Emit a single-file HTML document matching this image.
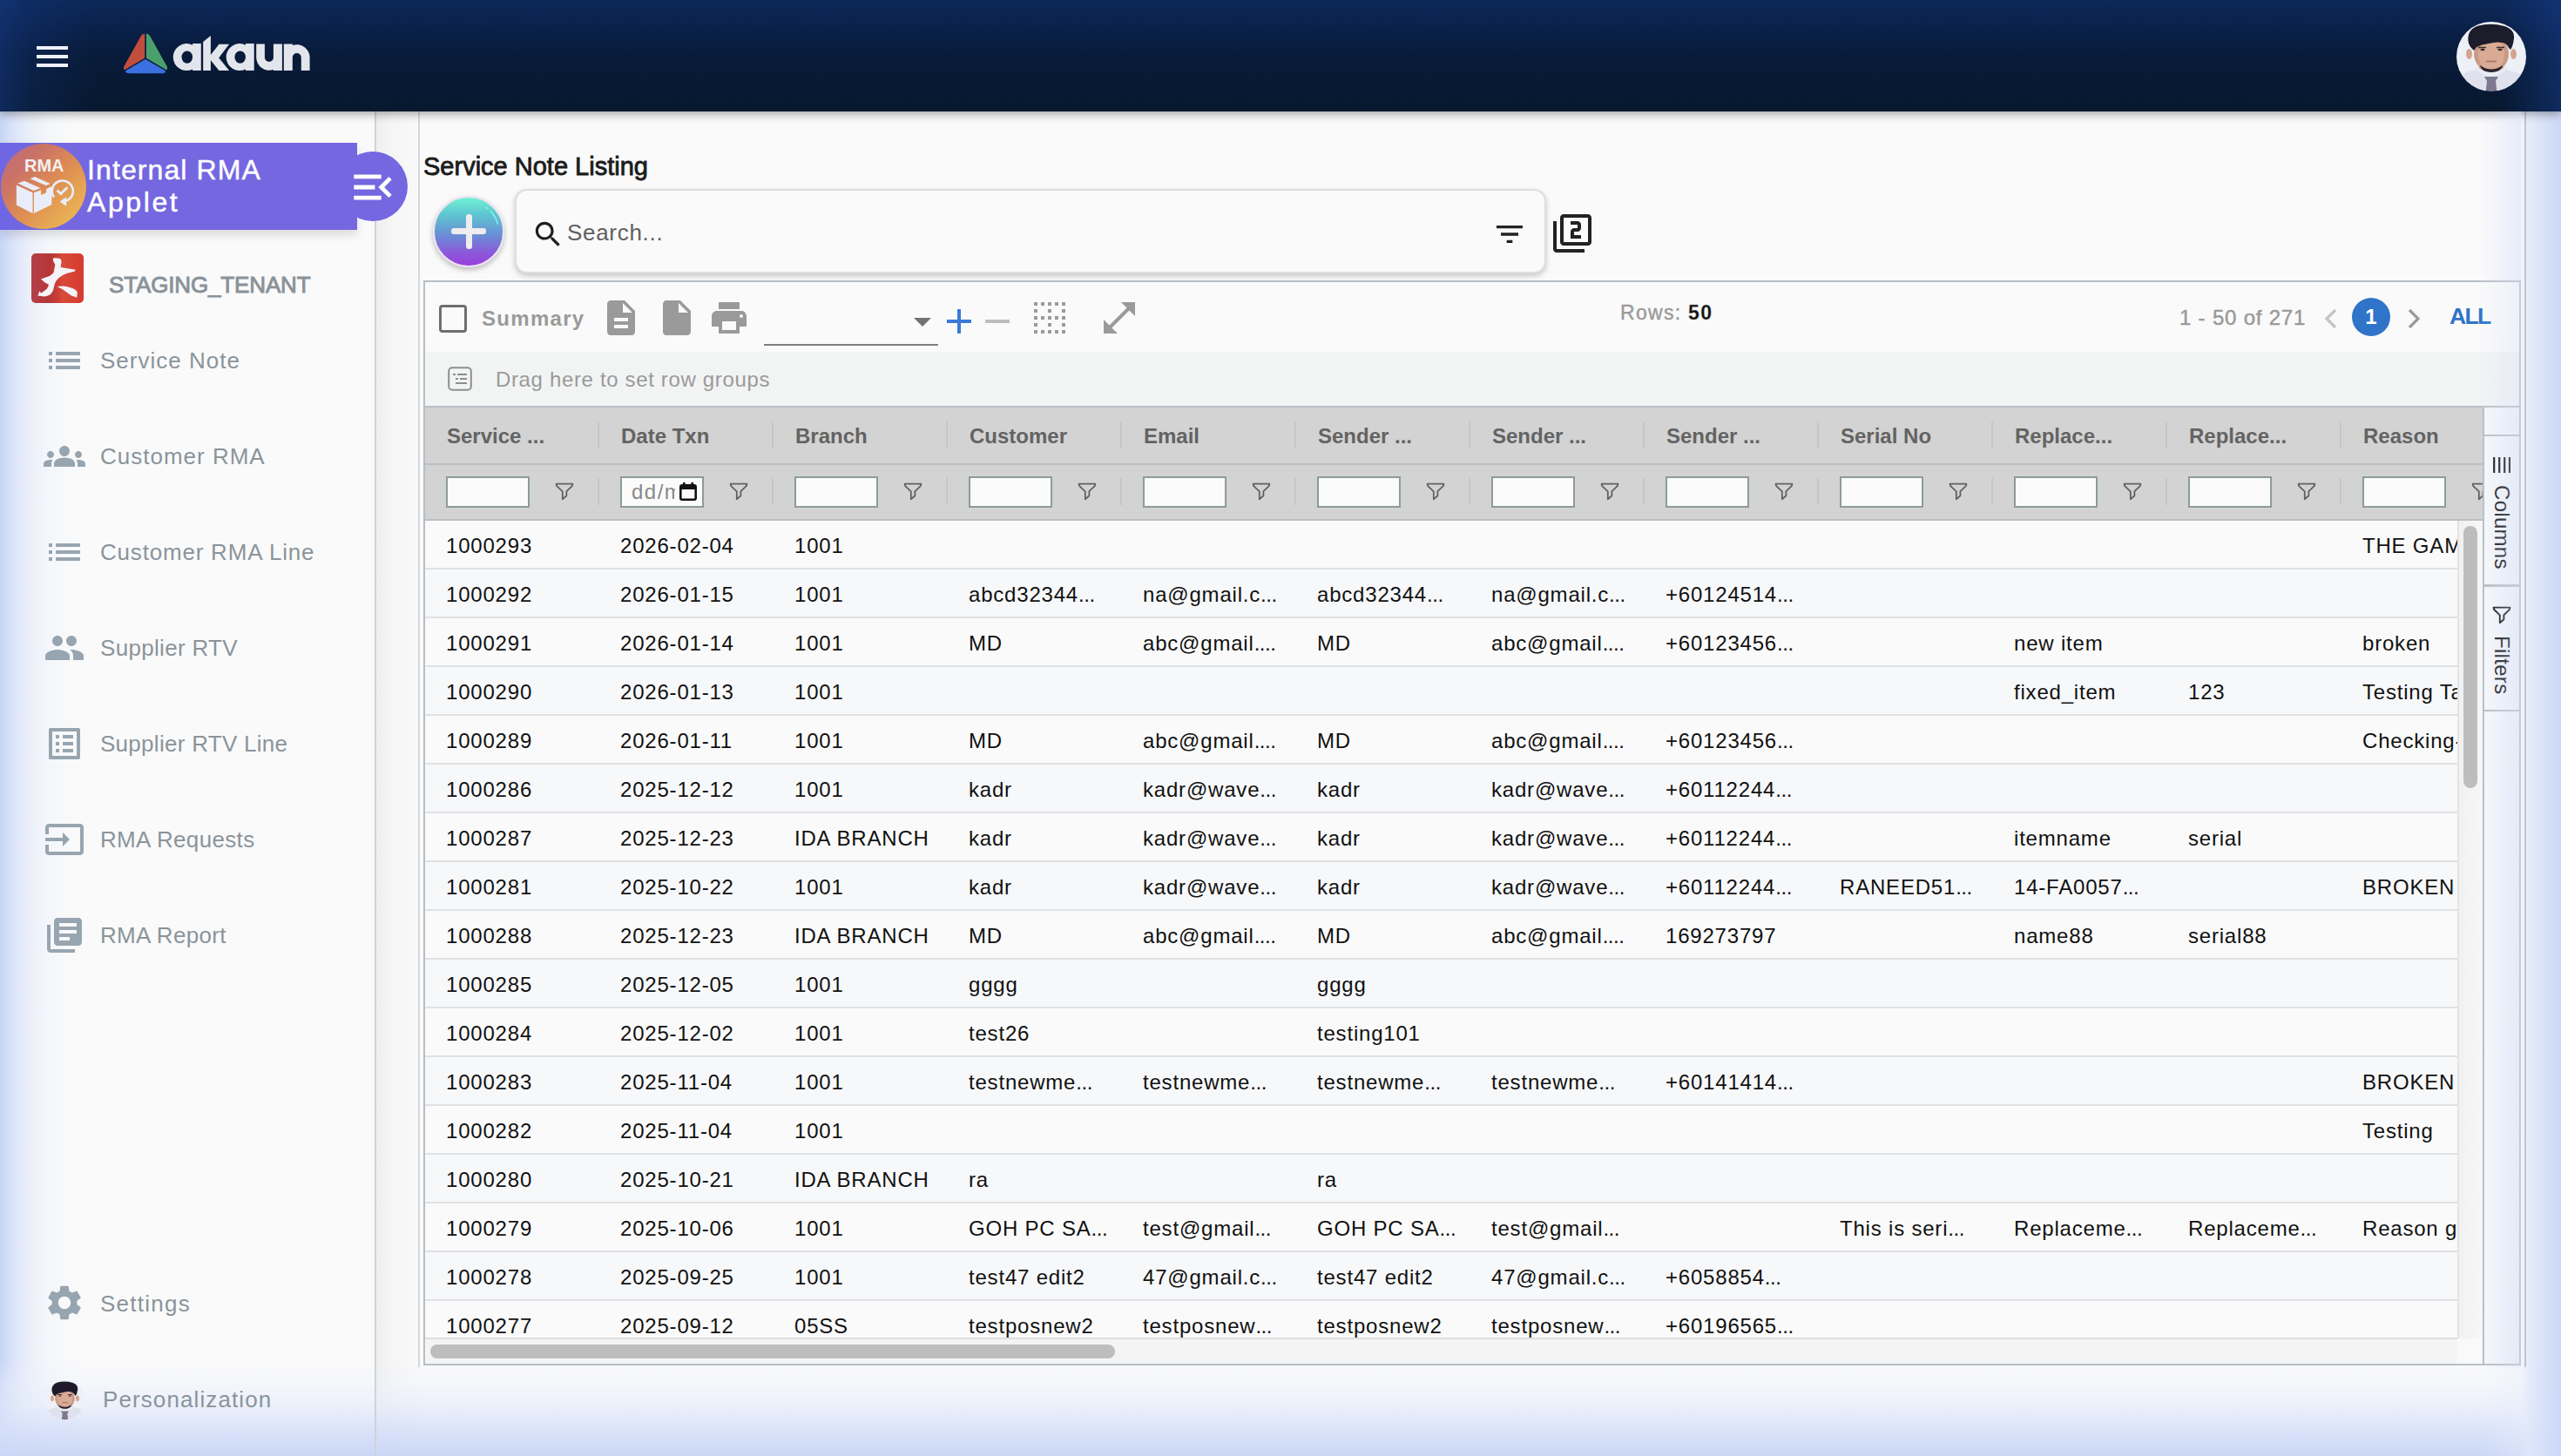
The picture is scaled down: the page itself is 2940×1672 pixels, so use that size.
<!DOCTYPE html>
<html><head><meta charset="utf-8">
<style>
*{box-sizing:border-box;margin:0;padding:0}
html,body{width:2940px;height:1672px;overflow:hidden;background:#fafafa;font-family:"Liberation Sans",sans-serif}
.abs{position:absolute}
.ov{position:absolute;pointer-events:none}
.nav{position:absolute;left:115px;font-size:26px;line-height:30px;letter-spacing:.85px;color:#8a949b;white-space:nowrap}
.hc{position:absolute;font-size:24px;font-weight:bold;color:#636363;white-space:nowrap;line-height:28px}
.fi{position:absolute;width:96px;height:36px;border:2px solid #8d9b9b;background:#fbfbfb}
.sep{position:absolute;width:2px;background:#c6c6c6}
.cell{position:absolute;font-size:24px;color:#111;white-space:nowrap;line-height:28px;letter-spacing:.8px}
.row{position:absolute;left:0;width:2333px;height:56px;border-bottom:2px solid #dfe1e4}
</style></head><body>

<div class="abs" style="left:432px;top:128px;width:48px;height:1544px;background:linear-gradient(to right,#efefef,#f6f6f6 45%,#f9f9f9)"></div>
<div class="ov" style="left:0;top:128px;width:130px;height:1544px;background:linear-gradient(to right,rgba(196,210,246,.95) 0px,rgba(204,217,247,.75) 12px,rgba(214,225,249,.5) 30px,rgba(228,235,251,.25) 55px,rgba(240,243,252,.1) 80px,rgba(250,250,250,0) 100px)"></div>
<div class="ov" style="left:0;top:1560px;width:2940px;height:112px;background:linear-gradient(to bottom,rgba(240,243,252,0) 0px,rgba(236,240,252,.35) 30px,rgba(226,233,250,.6) 55px,rgba(214,224,249,.85) 80px,rgba(203,215,246,1) 112px)"></div>
<div class="ov" style="left:2850px;top:128px;width:90px;height:1544px;background:linear-gradient(to right,rgba(236,240,252,0) 0px,rgba(232,237,251,.45) 45px,rgba(226,233,250,.8) 52px,rgba(214,224,248,.95) 70px,rgba(203,216,247,1) 90px)"></div>
<div class="abs" style="left:430px;top:128px;width:2px;height:1544px;background:#cfd3da"></div>
<div class="abs" style="left:480px;top:128px;width:2px;height:1442px;background:#d5d8dc"></div>
<div class="abs" style="left:2898px;top:128px;width:2px;height:1442px;background:#bfc5cf"></div>
<div class="abs" style="left:0;top:0;width:2940px;height:128px;background:linear-gradient(to bottom,#0c2858 0%,#0a2048 28%,#081b39 50%,#07182f 100%);box-shadow:0 3px 10px rgba(0,0,0,.35)">
<div class="abs" style="left:0;top:0;width:110px;height:128px;background:linear-gradient(to right,rgba(25,65,150,.42),rgba(25,65,150,.18) 35px,rgba(25,65,150,0) 110px)"></div>
<div class="abs" style="right:0;top:0;width:70px;height:128px;background:linear-gradient(to left,rgba(25,65,150,.45),rgba(25,65,150,0))"></div>
<div class="abs" style="left:42px;top:53px;width:36px;height:4px;background:#eef1fc"></div>
<div class="abs" style="left:42px;top:63px;width:36px;height:4px;background:#eef1fc"></div>
<div class="abs" style="left:42px;top:73px;width:36px;height:4px;background:#eef1fc"></div>
<svg class="abs" style="left:0;top:0" width="400" height="128" viewBox="0 0 400 128">
<path d="M166.2 38.8Q163 39 161.3 42.3L142.5 76Q141 79.5 143.1 80.2L166.2 66.7Z" fill="#c04d3d"/>
<path d="M167.9 38.8Q171 39 172.7 42.3L191.5 76Q193 79.5 190.9 80.2L167.9 66.7Z" fill="#4aa06c"/>
<path d="M167 67.9L144.5 81Q143 83.8 147.5 84.2H186.5Q191 83.8 189.5 81Z" fill="#3a70e0"/>
<g fill="#e3e5ec" fill-rule="evenodd">
<path d="M221.1 50.1H230.8V81.1H221.1V79.5A15.5 15.5 0 1 1 221.1 51.7ZM208.5 65.6A6.3 7.2 0 1 0 221.1 65.6A6.3 7.2 0 1 0 208.5 65.6Z"/>
<path d="M241.9 41L233.2 48.1V81H241.9V69.3L251.4 81H263.1L251.2 66.4L263.1 50.8H251.5L241.9 63Z"/>
<path transform="translate(60.9 0)" d="M221.1 50.1H230.8V81.1H221.1V79.5A15.5 15.5 0 1 1 221.1 51.7ZM208.5 65.6A6.3 7.2 0 1 0 221.1 65.6A6.3 7.2 0 1 0 208.5 65.6Z"/>
<path d="M294.2 50.5H303.9V66A5 5 0 0 0 313.9 66V50.5H323.9V81.1H313.9V80A14.85 14.85 0 0 1 294.2 66Z"/>
<path d="M325.8 81.1V50.5H335.8V52A14.85 14.85 0 0 1 355.6 66V81.1H345.8V66A5 5 0 0 0 335.8 66V81.1Z"/>
</g></svg>
<svg class="abs" style="left:2815px;top:20px" width="90" height="90" viewBox="0 0 90 90"><defs><clipPath id="avc"><circle cx="45" cy="45" r="40"/></clipPath><filter id="avb"><feGaussianBlur stdDeviation="0.7"/></filter></defs><g clip-path="url(#avc)"><g filter="url(#avb)"><rect width="90" height="90" fill="#eef0f8"/><path d="M5 90V72Q8 64 24 61L36 56H54L66 61Q82 64 85 72V90Z" fill="#dfe2ec"/><path d="M29 53Q45 72 61 53L63 60L47 70H43L27 60Z" fill="#e8ebf3"/><path d="M37 68H53L50 73L52 90H38L40 73Z" fill="#7e7890"/><path d="M31 50Q45 66 59 50V58Q45 68 31 58Z" fill="#c39784"/><ellipse cx="19.5" cy="42" rx="3.5" ry="6" fill="#d3a58e"/><ellipse cx="70.5" cy="42" rx="3.5" ry="6" fill="#d3a58e"/><ellipse cx="45" cy="42" rx="20" ry="20.5" fill="#c99a84"/><ellipse cx="45" cy="42" rx="15" ry="19" fill="#d9ab94"/><path d="M32 55Q45 64 58 55Q57 62.5 45 63Q33 62.5 32 55Z" fill="#2a2230"/><path d="M18.5 27Q17 14 30 9.5Q45 6 60 10Q72 14 71 24Q70 33 67 37L65 35Q63 30 58 29Q50 27.5 42 30Q34 31 28 34L25 38Q19 33 18.5 27Z" fill="#1e1a2a"/><path d="M30 34.5H39M51 34.5H60" stroke="#3a2a2a" stroke-width="1.6"/><ellipse cx="35" cy="37" rx="2.6" ry="1.3" fill="#3a2a30"/><ellipse cx="55" cy="37" rx="2.6" ry="1.3" fill="#3a2a30"/><path d="M39 50.5H51" stroke="#b07a6e" stroke-width="2"/></g></g></svg>
</div>
<div class="abs" style="left:0;top:164px;width:410px;height:100px;background:linear-gradient(to right,#6e66e4,#7467e0 15%,#7467e0);box-shadow:0 6px 10px rgba(0,0,0,.12)"></div>
<div class="abs" style="left:388px;top:174px;width:80px;height:80px;border-radius:50%;background:#7467e0"></div>
<svg class="abs" style="left:399px;top:186px" width="58" height="58" viewBox="0 0 24 24"><path d="M3 18h13v-2H3v2zm0-5h10v-2H3v2zm0-7v2h13V6H3zm18 9.59L17.42 12 21 8.41 19.59 7l-5 5 5 5L21 15.59z" fill="#ffffff"/></svg>
<div class="abs" style="left:1px;top:165px;width:98px;height:98px;border-radius:50%;background:linear-gradient(135deg,#b86c82 0%,#cc7366 28%,#de8f52 55%,#f0c455 100%)"></div>
<svg class="abs" style="left:0;top:162px" width="102" height="104" viewBox="0 162 102 104"><g fill="#eaedf9">
<path d="M18.9 212.4V235.6L37.5 244.9V221.3Z"/>
<path d="M38.9 221.3V244.9L59.3 234.9V214.1L53.2 216.9V221.3L47.1 224.1V218.2Z"/>
<path d="M20.4 210.6L27.9 207.7L46.4 215.9L38.6 219.1Z"/>
<path d="M34.6 205.2L40 203L57.9 210.9L52.9 213.1Z"/>
</g>
<path d="M62 226.5A12 12 0 1 1 73.5 231.4" fill="none" stroke="#eaedf9" stroke-width="2.6"/>
<path d="M68.6 231.5L76.2 226.3V236.7Z" fill="#eaedf9"/>
<path d="M65.5 218.6L69.7 222.6L77.4 215.2" fill="none" stroke="#eaedf9" stroke-width="2.8"/>
</svg>
<div class="abs" style="left:28px;top:179px;font-size:20px;line-height:22px;font-weight:bold;color:#f4f0f0">RMA</div>
<div class="abs" style="left:100px;top:177px;font-size:32px;line-height:36.5px;letter-spacing:1.1px;color:#fff;-webkit-text-stroke:.45px #fff">Internal RMA<br><span style="letter-spacing:2.6px">Applet</span></div>
<div class="abs" style="left:36px;top:291px;width:60px;height:57px;border-radius:5px;background:linear-gradient(to right,#b3404a 0%,#b63637 35%,#c93f35 50%,#d84a3a 60%,#d63a2f 100%)"></div>
<svg class="abs" style="left:32px;top:286px" width="68" height="66" viewBox="0 0 68 66"><path d="M29 10.4Q33 10 37.2 10.9Q39 13 38.5 15.4L37.6 20.4L39.4 21.3L54.9 23.8L53.5 25.8L45.3 27.7Q40 29.5 36.3 32.6Q32 36 30.8 39.9L29 47.6Q27.5 51 25.4 52.6Q22 54.6 19 54.4L11.3 53.5L13.6 48L15 50.8L21.8 45.8Q23.5 43 24 40.8L19.5 38.5L15 34.5L25.4 30.8L29.5 27.2L31.3 18.1L29 13.6Z" fill="#f3f3f8"/><path d="M33.5 43.1L40.8 42.6Q50 44 54.4 46.7Q57.5 49 56.7 52.1L56.2 55.8L49.9 53.5L39.9 46.2Z" fill="#f3f3f8"/></svg>
<div class="abs" style="left:125px;top:312px;font-size:26px;line-height:30px;font-weight:normal;-webkit-text-stroke:.9px #8a9298;color:#8a9298;letter-spacing:-.15px">STAGING_TENANT</div>
<div class="nav" style="top:399px;letter-spacing:1.0px">Service Note</div>
<div class="nav" style="top:509px;letter-spacing:1.0px">Customer RMA</div>
<div class="nav" style="top:619px;letter-spacing:0.8px">Customer RMA Line</div>
<div class="nav" style="top:729px;letter-spacing:0.32px">Supplier RTV</div>
<div class="nav" style="top:839px;letter-spacing:0.28px">Supplier RTV Line</div>
<div class="nav" style="top:949px;letter-spacing:0.34px">RMA Requests</div>
<div class="nav" style="top:1059px;letter-spacing:0.32px">RMA Report</div>
<svg class="abs" style="left:50px;top:390px" width="48" height="48" viewBox="0 0 24 24"><path d="M3 13h2v-2H3v2zm0 4h2v-2H3v2zm0-8h2V7H3v2zm4 4h14v-2H7v2zm0 4h14v-2H7v2zM7 7v2h14V7H7z" fill="#97a5b0"/></svg>
<svg class="abs" style="left:50px;top:500px" width="48" height="48" viewBox="0 0 24 24"><path d="M12 12.75c1.63 0 3.07.39 4.24.9 1.08.48 1.76 1.56 1.76 2.73V18H6v-1.61c0-1.18.68-2.26 1.76-2.73 1.17-.52 2.61-.91 4.24-.91zM4 13c1.1 0 2-.9 2-2s-.9-2-2-2-2 .9-2 2 .9 2 2 2zm1.13 1.1c-.37-.06-.74-.1-1.13-.1-.99 0-1.93.21-2.78.58C.48 14.9 0 15.62 0 16.43V18h4.5v-1.61c0-.83.23-1.61.63-2.29zM20 13c1.1 0 2-.9 2-2s-.9-2-2-2-2 .9-2 2 .9 2 2 2zm4 3.43c0-.81-.48-1.53-1.22-1.85-.85-.37-1.79-.58-2.78-.58-.39 0-.76.04-1.13.1.4.68.63 1.46.63 2.29V18H24v-1.57zM12 6c1.66 0 3 1.34 3 3s-1.34 3-3 3-3-1.34-3-3 1.34-3 3-3z" fill="#97a5b0"/></svg>
<svg class="abs" style="left:50px;top:610px" width="48" height="48" viewBox="0 0 24 24"><path d="M3 13h2v-2H3v2zm0 4h2v-2H3v2zm0-8h2V7H3v2zm4 4h14v-2H7v2zm0 4h14v-2H7v2zM7 7v2h14V7H7z" fill="#97a5b0"/></svg>
<svg class="abs" style="left:50px;top:720px" width="48" height="48" viewBox="0 0 24 24"><path d="M16 11c1.66 0 2.99-1.34 2.99-3S17.66 5 16 5c-1.66 0-3 1.34-3 3s1.34 3 3 3zm-8 0c1.66 0 2.99-1.34 2.99-3S9.66 5 8 5C6.34 5 5 6.34 5 8s1.34 3 3 3zm0 2c-2.33 0-7 1.17-7 3.5V19h14v-2.5c0-2.33-4.67-3.5-7-3.5zm8 0c-.29 0-.62.02-.97.05 1.16.84 1.97 1.97 1.97 3.45V19h6v-2.5c0-2.33-4.67-3.5-7-3.5z" fill="#97a5b0"/></svg>
<svg class="abs" style="left:50px;top:830px" width="48" height="48" viewBox="0 0 24 24"><path d="M19 5v14H5V5h14m1.1-2H3.9c-.5 0-.9.4-.9.9v16.2c0 .4.4.9.9.9h16.2c.4 0 .9-.5.9-.9V3.9c0-.5-.5-.9-.9-.9zM11 7h6v2h-6V7zm0 4h6v2h-6v-2zm0 4h6v2h-6zM7 7h2v2H7zm0 4h2v2H7zm0 4h2v2H7z" fill="#97a5b0"/></svg>
<svg class="abs" style="left:50px;top:940px" width="48" height="48" viewBox="0 0 24 24"><path d="M21 3.01H3c-1.1 0-2 .9-2 2V9h2V4.99h18v14.03H3V15H1v4.01c0 1.1.9 1.98 2 1.98h18c1.1 0 2-.88 2-1.98v-14c0-1.11-.9-2-2-2zM11 16l4-4-4-4v3H1v2h10v3z" fill="#97a5b0"/></svg>
<svg class="abs" style="left:50px;top:1050px" width="48" height="48" viewBox="0 0 24 24"><path d="M4 6H2v14c0 1.1.9 2 2 2h14v-2H4V6zm16-4H8c-1.1 0-2 .9-2 2v12c0 1.1.9 2 2 2h12c1.1 0 2-.9 2-2V4c0-1.1-.9-2-2-2zm-1 9H9V9h10v2zm-4 4H9v-2h6v2zm4-8H9V5h10v2z" fill="#97a5b0"/></svg>
<svg class="abs" style="left:50px;top:1472px" width="48" height="48" viewBox="0 0 24 24"><path d="M19.14 12.94c.04-.3.06-.61.06-.94 0-.32-.02-.64-.07-.94l2.03-1.58c.18-.14.23-.41.12-.61l-1.92-3.32c-.12-.22-.37-.29-.59-.22l-2.39.96c-.5-.38-1.03-.7-1.62-.94l-.36-2.54c-.04-.24-.24-.41-.48-.41h-3.84c-.24 0-.43.17-.47.41l-.36 2.54c-.59.24-1.13.57-1.62.94l-2.39-.96c-.22-.08-.47 0-.59.22L2.74 8.87c-.12.21-.08.47.12.61l2.03 1.58c-.05.3-.09.63-.09.94s.02.64.07.94l-2.03 1.58c-.18.14-.23.41-.12.61l1.92 3.32c.12.22.37.29.59.22l2.39-.96c.5.38 1.03.7 1.62.94l.36 2.54c.05.24.24.41.48.41h3.84c.24 0 .44-.17.47-.41l.36-2.54c.59-.24 1.13-.56 1.62-.94l2.39.96c.22.08.47 0 .59-.22l1.92-3.32c.12-.22.07-.47-.12-.61l-2.01-1.58zM12 15.6c-1.98 0-3.6-1.62-3.6-3.6s1.62-3.6 3.6-3.6 3.6 1.62 3.6 3.6-1.62 3.6-3.6 3.6z" fill="#97a5b0"/></svg>
<div class="nav" style="top:1482px;letter-spacing:1.25px">Settings</div>
<div class="nav" style="top:1592px;left:118px;letter-spacing:1.1px">Personalization</div>
<svg class="abs" style="left:49px;top:1582px" width="51" height="51" viewBox="0 0 90 90"><defs><clipPath id="avc2"><circle cx="45" cy="45" r="40"/></clipPath></defs><g clip-path="url(#avc2)"><rect width="90" height="90" fill="#eef0f8"/><path d="M5 90V72Q8 64 24 61L36 56H54L66 61Q82 64 85 72V90Z" fill="#dfe2ec"/><path d="M29 53Q45 72 61 53L63 60L47 70H43L27 60Z" fill="#e8ebf3"/><path d="M37 68H53L50 73L52 90H38L40 73Z" fill="#7e7890"/><path d="M31 50Q45 66 59 50V58Q45 68 31 58Z" fill="#c39784"/><ellipse cx="19.5" cy="42" rx="3.5" ry="6" fill="#d3a58e"/><ellipse cx="70.5" cy="42" rx="3.5" ry="6" fill="#d3a58e"/><ellipse cx="45" cy="42" rx="20" ry="20.5" fill="#c99a84"/><ellipse cx="45" cy="42" rx="15" ry="19" fill="#d9ab94"/><path d="M32 55Q45 64 58 55Q57 62.5 45 63Q33 62.5 32 55Z" fill="#2a2230"/><path d="M18.5 27Q17 14 30 9.5Q45 6 60 10Q72 14 71 24Q70 33 67 37L65 35Q63 30 58 29Q50 27.5 42 30Q34 31 28 34L25 38Q19 33 18.5 27Z" fill="#1e1a2a"/><path d="M30 34.5H39M51 34.5H60" stroke="#3a2a2a" stroke-width="1.6"/><ellipse cx="35" cy="37" rx="2.6" ry="1.3" fill="#3a2a30"/><ellipse cx="55" cy="37" rx="2.6" ry="1.3" fill="#3a2a30"/><path d="M39 50.5H51" stroke="#b07a6e" stroke-width="2"/></g></g></svg>
<div class="abs" style="left:486px;top:174px;font-size:29px;line-height:34px;font-weight:normal;-webkit-text-stroke:.85px #1c1c1c;color:#1c1c1c;letter-spacing:0px">Service Note Listing</div>
<div class="abs" style="left:497px;top:225px;width:82px;height:82px;border-radius:50%;border:2px solid #ebe3f0;background:linear-gradient(to bottom,#70f2d2 0%,#5ec5d0 25%,#6a8ed6 55%,#8a5bd8 80%,#9b3ee0 100%);box-shadow:0 3px 6px rgba(0,0,0,.25)"></div>
<svg class="abs" style="left:497px;top:225px" width="82" height="82" viewBox="0 0 82 82"><path d="M60.2 12.5A34.5 34.5 0 0 1 74.5 32.6" stroke="#86f4f0" stroke-width="1.5" fill="none" stroke-dasharray="4 3.5 60"/></svg>
<div class="abs" style="left:518px;top:262px;width:40px;height:7px;border-radius:3px;background:#efeded"></div>
<div class="abs" style="left:534.5px;top:246px;width:7px;height:40px;border-radius:3px;background:#efeded"></div>
<div class="abs" style="left:591px;top:217px;width:1184px;height:97px;border-radius:14px;border:2px solid #dedede;background:#fafafa;box-shadow:0 3px 6px rgba(0,0,0,.2)"></div>
<svg class="abs" style="left:610px;top:250px" width="38.4" height="38.4" viewBox="0 0 24 24"><path d="M15.5 14h-.79l-.28-.27C15.41 12.59 16 11.11 16 9.5 16 5.91 13.09 3 9.5 3S3 5.91 3 9.5 5.91 16 9.5 16c1.61 0 3.09-.59 4.23-1.57l.27.28v.79l5 4.99L20.49 19l-4.99-5zm-6 0C7.01 14 5 11.99 5 9.5S7.01 5 9.5 5 14 7.01 14 9.5 11.99 14 9.5 14z" fill="#1f1f1f"/></svg>
<div class="abs" style="left:651px;top:252px;font-size:26px;line-height:30px;color:#606060;letter-spacing:.7px">Search...</div>
<svg class="abs" style="left:1713px;top:249px" width="40" height="40" viewBox="0 0 24 24"><path d="M10 18h4v-2h-4v2zM3 6v2h18V6H3zm3 7h12v-2H6v2z" fill="#222"/></svg>
<svg class="abs" style="left:1781px;top:244px" width="48" height="48" viewBox="0 0 24 24"><path d="M3 5H1v16c0 1.1.9 2 2 2h16v-2H3V5zm18-4H7c-1.1 0-2 .9-2 2v14c0 1.1.9 2 2 2h14c1.1 0 2-.9 2-2V3c0-1.1-.9-2-2-2zm0 16H7V3h14v14zm-4-4h-4v-2h2c1.1 0 2-.89 2-2V7c0-1.11-.9-2-2-2h-4v2h4v2h-2c-1.1 0-2 .89-2 2v4h6v-2z" fill="#222"/></svg>
<div class="abs" style="left:486px;top:322px;width:2408px;height:1246px;border:2px solid #b8bec4;background:#fafafa;overflow:hidden">
<div class="abs" style="left:16px;top:26px;width:32px;height:32px;border:3.5px solid #6e6e6e;border-radius:4px"></div>
<div class="abs" style="left:65px;top:28px;font-size:24px;line-height:28px;font-weight:bold;color:#9a9a9a;letter-spacing:1.3px">Summary</div>
<svg class="abs" style="left:209px;top:21px" width="32" height="40" viewBox="4 2 16 20"><path d="M14 2H6c-1.1 0-1.99.9-1.99 2L4 20c0 1.1.89 2 1.99 2H18c1.1 0 2-.9 2-2V8l-6-6zm2 16H8v-2h8v2zm0-4H8v-2h8v2zm-3-5V3.5L18.5 9H13z" fill="#9a9a9a"/></svg>
<svg class="abs" style="left:273px;top:21px" width="32" height="40" viewBox="4 2 16 20"><path d="M6 2c-1.1 0-1.99.9-1.99 2L4 20c0 1.1.89 2 1.99 2H18c1.1 0 2-.9 2-2V8l-6-6H6zm7 7V3.5L18.5 9H13z" fill="#9a9a9a"/></svg>
<svg class="abs" style="left:329px;top:23px" width="40" height="36" viewBox="2 3 20 18"><path d="M19 8H5c-1.66 0-3 1.34-3 3v6h4v4h12v-4h4v-6c0-1.66-1.34-3-3-3zm-3 11H8v-5h8v5zm3-7c-.55 0-1-.45-1-1s.45-1 1-1 1 .45 1 1-.45 1-1 1zm-1-9H6v4h12V3z" fill="#9a9a9a"/></svg>
<div class="abs" style="left:389px;top:71px;width:200px;height:2px;background:#7f7f7f"></div>
<svg class="abs" style="left:561px;top:41px" width="20" height="10" viewBox="0 0 20 10"><path d="M0 0h20L10 10z" fill="#727272"/></svg>
<div class="abs" style="left:599px;top:43px;width:28px;height:4px;background:#3a7bd5"></div>
<div class="abs" style="left:611px;top:31px;width:4px;height:28px;background:#3a7bd5"></div>
<div class="abs" style="left:643px;top:43px;width:28px;height:4px;background:#bdbdbd"></div>
<svg class="abs" style="left:699px;top:23px" width="36" height="36" viewBox="3 3 18 18"><path d="M7 5h2V3H7v2zm0 8h2v-2H7v2zm0 8h2v-2H7v2zm4-4h2v-2h-2v2zm0 4h2v-2h-2v2zm-8 0h2v-2H3v2zm0-4h2v-2H3v2zm0-4h2v-2H3v2zm0-4h2V7H3v2zm0-4h2V3H3v2zm8 8h2v-2h-2v2zm8 4h2v-2h-2v2zm0-4h2v-2h-2v2zm0 8h2v-2h-2v2zm0-12h2V7h-2v2zm-8 0h2V7h-2v2zm8-6v2h2V3h-2zm-8 2h2V3h-2v2zm4 16h2v-2h-2v2zm0-8h2v-2h-2v2zm0-8h2V3h-2v2z" fill="#9a9a9a"/></svg>
<svg class="abs" style="left:779px;top:23px" width="36" height="36" viewBox="3 3 18 18"><path d="M21 11V3h-8l3.29 3.29-10 10L3 13v8h8l-3.29-3.29 10-10z" fill="#9a9a9a"/></svg>
<div class="abs" style="left:1372px;top:21px;font-size:23px;line-height:28px;color:#999;-webkit-text-stroke:.4px #999;letter-spacing:1.3px">Rows: <b style="color:#111">50</b></div>
<div class="abs" style="left:2014px;top:27px;font-size:24px;line-height:28px;color:#999;-webkit-text-stroke:.45px #999;letter-spacing:.8px">1 - 50 of 271</div>
<svg class="abs" style="left:2178px;top:30px" width="18" height="24" viewBox="0 0 18 24"><path d="M15 2 L5 12 L15 22" fill="none" stroke="#c4c4c4" stroke-width="3.2"/></svg>
<div class="abs" style="left:2212px;top:18px;width:44px;height:44px;border-radius:50%;background:#2f74c8;color:#fff;font-size:24px;font-weight:bold;line-height:44px;text-align:center">1</div>
<svg class="abs" style="left:2275px;top:30px" width="18" height="24" viewBox="0 0 18 24"><path d="M3 2 L13 12 L3 22" fill="none" stroke="#9b9b9b" stroke-width="3.2"/></svg>
<div class="abs" style="left:2324px;top:24px;font-size:26.5px;line-height:30px;font-weight:bold;color:#2f74c8;letter-spacing:-1.6px">ALL</div>
<div class="abs" style="left:0;top:80px;width:2405px;height:64px;background:#f2f4f4;border-bottom:2px solid #b9c0c5"></div>
<svg class="abs" style="left:26px;top:97px" width="28" height="28" viewBox="0 0 28 28"><rect x="1.2" y="1.2" width="25.6" height="25.6" rx="4" fill="none" stroke="#8e8e8e" stroke-width="2"/><path d="M6 9h3M11 9h11M9 14h3M14 14h8M9 19h13" stroke="#8e8e8e" stroke-width="2"/></svg>
<div class="abs" style="left:81px;top:98px;font-size:24px;line-height:28px;color:#9a9a9a;letter-spacing:.65px">Drag here to set row groups</div>
<div class="abs" style="left:0;top:144px;width:2363px;height:130px;background:#d3d3d3"></div>
<div class="abs" style="left:0;top:208px;width:2363px;height:2px;background:#b9c0c5"></div>
<div class="abs" style="left:0;top:272px;width:2363px;height:2px;background:#b9c0c5"></div>
<div class="abs" style="left:2333px;top:274px;width:30px;height:939px;background:linear-gradient(to right,#f1f1f1,#f7f7f7);border-left:2px solid #e3e3e3"></div>
<div class="abs" style="left:2340px;top:280px;width:16px;height:301px;border-radius:8px;background:#bdbdbd"></div>
<div class="abs" style="left:0;top:274px;width:2333px;height:939px;overflow:hidden">
<div class="row" style="top:0px;background:#fafafa"></div>
<div class="cell" style="left:24px;top:15px">1000293</div>
<div class="cell" style="left:224px;top:15px">2026-02-04</div>
<div class="cell" style="left:424px;top:15px">1001</div>
<div class="cell" style="left:2224px;top:15px">THE GAM</div>
<div class="row" style="top:56px;background:#f7f8fa"></div>
<div class="cell" style="left:24px;top:71px">1000292</div>
<div class="cell" style="left:224px;top:71px">2026-01-15</div>
<div class="cell" style="left:424px;top:71px">1001</div>
<div class="cell" style="left:624px;top:71px">abcd32344<span style="letter-spacing:-.45px">...</span></div>
<div class="cell" style="left:824px;top:71px">na@gmail.c<span style="letter-spacing:-.45px">...</span></div>
<div class="cell" style="left:1024px;top:71px">abcd32344<span style="letter-spacing:-.45px">...</span></div>
<div class="cell" style="left:1224px;top:71px">na@gmail.c<span style="letter-spacing:-.45px">...</span></div>
<div class="cell" style="left:1424px;top:71px">+60124514<span style="letter-spacing:-.45px">...</span></div>
<div class="row" style="top:112px;background:#fafafa"></div>
<div class="cell" style="left:24px;top:127px">1000291</div>
<div class="cell" style="left:224px;top:127px">2026-01-14</div>
<div class="cell" style="left:424px;top:127px">1001</div>
<div class="cell" style="left:624px;top:127px">MD</div>
<div class="cell" style="left:824px;top:127px">abc@gmail<span style="letter-spacing:-.45px">...</span>.</div>
<div class="cell" style="left:1024px;top:127px">MD</div>
<div class="cell" style="left:1224px;top:127px">abc@gmail<span style="letter-spacing:-.45px">...</span>.</div>
<div class="cell" style="left:1424px;top:127px">+60123456<span style="letter-spacing:-.45px">...</span></div>
<div class="cell" style="left:1824px;top:127px">new item</div>
<div class="cell" style="left:2224px;top:127px">broken</div>
<div class="row" style="top:168px;background:#f7f8fa"></div>
<div class="cell" style="left:24px;top:183px">1000290</div>
<div class="cell" style="left:224px;top:183px">2026-01-13</div>
<div class="cell" style="left:424px;top:183px">1001</div>
<div class="cell" style="left:1824px;top:183px">fixed_item</div>
<div class="cell" style="left:2024px;top:183px">123</div>
<div class="cell" style="left:2224px;top:183px">Testing Ta</div>
<div class="row" style="top:224px;background:#fafafa"></div>
<div class="cell" style="left:24px;top:239px">1000289</div>
<div class="cell" style="left:224px;top:239px">2026-01-11</div>
<div class="cell" style="left:424px;top:239px">1001</div>
<div class="cell" style="left:624px;top:239px">MD</div>
<div class="cell" style="left:824px;top:239px">abc@gmail<span style="letter-spacing:-.45px">...</span>.</div>
<div class="cell" style="left:1024px;top:239px">MD</div>
<div class="cell" style="left:1224px;top:239px">abc@gmail<span style="letter-spacing:-.45px">...</span>.</div>
<div class="cell" style="left:1424px;top:239px">+60123456<span style="letter-spacing:-.45px">...</span></div>
<div class="cell" style="left:2224px;top:239px">Checking-</div>
<div class="row" style="top:280px;background:#f7f8fa"></div>
<div class="cell" style="left:24px;top:295px">1000286</div>
<div class="cell" style="left:224px;top:295px">2025-12-12</div>
<div class="cell" style="left:424px;top:295px">1001</div>
<div class="cell" style="left:624px;top:295px">kadr</div>
<div class="cell" style="left:824px;top:295px">kadr@wave<span style="letter-spacing:-.45px">...</span></div>
<div class="cell" style="left:1024px;top:295px">kadr</div>
<div class="cell" style="left:1224px;top:295px">kadr@wave<span style="letter-spacing:-.45px">...</span></div>
<div class="cell" style="left:1424px;top:295px">+60112244<span style="letter-spacing:-.45px">...</span></div>
<div class="row" style="top:336px;background:#fafafa"></div>
<div class="cell" style="left:24px;top:351px">1000287</div>
<div class="cell" style="left:224px;top:351px">2025-12-23</div>
<div class="cell" style="left:424px;top:351px">IDA BRANCH</div>
<div class="cell" style="left:624px;top:351px">kadr</div>
<div class="cell" style="left:824px;top:351px">kadr@wave<span style="letter-spacing:-.45px">...</span></div>
<div class="cell" style="left:1024px;top:351px">kadr</div>
<div class="cell" style="left:1224px;top:351px">kadr@wave<span style="letter-spacing:-.45px">...</span></div>
<div class="cell" style="left:1424px;top:351px">+60112244<span style="letter-spacing:-.45px">...</span></div>
<div class="cell" style="left:1824px;top:351px">itemname</div>
<div class="cell" style="left:2024px;top:351px">serial</div>
<div class="row" style="top:392px;background:#f7f8fa"></div>
<div class="cell" style="left:24px;top:407px">1000281</div>
<div class="cell" style="left:224px;top:407px">2025-10-22</div>
<div class="cell" style="left:424px;top:407px">1001</div>
<div class="cell" style="left:624px;top:407px">kadr</div>
<div class="cell" style="left:824px;top:407px">kadr@wave<span style="letter-spacing:-.45px">...</span></div>
<div class="cell" style="left:1024px;top:407px">kadr</div>
<div class="cell" style="left:1224px;top:407px">kadr@wave<span style="letter-spacing:-.45px">...</span></div>
<div class="cell" style="left:1424px;top:407px">+60112244<span style="letter-spacing:-.45px">...</span></div>
<div class="cell" style="left:1624px;top:407px">RANEED51<span style="letter-spacing:-.45px">...</span></div>
<div class="cell" style="left:1824px;top:407px">14-FA0057<span style="letter-spacing:-.45px">...</span></div>
<div class="cell" style="left:2224px;top:407px">BROKEN I</div>
<div class="row" style="top:448px;background:#fafafa"></div>
<div class="cell" style="left:24px;top:463px">1000288</div>
<div class="cell" style="left:224px;top:463px">2025-12-23</div>
<div class="cell" style="left:424px;top:463px">IDA BRANCH</div>
<div class="cell" style="left:624px;top:463px">MD</div>
<div class="cell" style="left:824px;top:463px">abc@gmail<span style="letter-spacing:-.45px">...</span>.</div>
<div class="cell" style="left:1024px;top:463px">MD</div>
<div class="cell" style="left:1224px;top:463px">abc@gmail<span style="letter-spacing:-.45px">...</span>.</div>
<div class="cell" style="left:1424px;top:463px">169273797</div>
<div class="cell" style="left:1824px;top:463px">name88</div>
<div class="cell" style="left:2024px;top:463px">serial88</div>
<div class="row" style="top:504px;background:#f7f8fa"></div>
<div class="cell" style="left:24px;top:519px">1000285</div>
<div class="cell" style="left:224px;top:519px">2025-12-05</div>
<div class="cell" style="left:424px;top:519px">1001</div>
<div class="cell" style="left:624px;top:519px">gggg</div>
<div class="cell" style="left:1024px;top:519px">gggg</div>
<div class="row" style="top:560px;background:#fafafa"></div>
<div class="cell" style="left:24px;top:575px">1000284</div>
<div class="cell" style="left:224px;top:575px">2025-12-02</div>
<div class="cell" style="left:424px;top:575px">1001</div>
<div class="cell" style="left:624px;top:575px">test26</div>
<div class="cell" style="left:1024px;top:575px">testing101</div>
<div class="row" style="top:616px;background:#f7f8fa"></div>
<div class="cell" style="left:24px;top:631px">1000283</div>
<div class="cell" style="left:224px;top:631px">2025-11-04</div>
<div class="cell" style="left:424px;top:631px">1001</div>
<div class="cell" style="left:624px;top:631px">testnewme<span style="letter-spacing:-.45px">...</span></div>
<div class="cell" style="left:824px;top:631px">testnewme<span style="letter-spacing:-.45px">...</span></div>
<div class="cell" style="left:1024px;top:631px">testnewme<span style="letter-spacing:-.45px">...</span></div>
<div class="cell" style="left:1224px;top:631px">testnewme<span style="letter-spacing:-.45px">...</span></div>
<div class="cell" style="left:1424px;top:631px">+60141414<span style="letter-spacing:-.45px">...</span></div>
<div class="cell" style="left:2224px;top:631px">BROKEN</div>
<div class="row" style="top:672px;background:#fafafa"></div>
<div class="cell" style="left:24px;top:687px">1000282</div>
<div class="cell" style="left:224px;top:687px">2025-11-04</div>
<div class="cell" style="left:424px;top:687px">1001</div>
<div class="cell" style="left:2224px;top:687px">Testing</div>
<div class="row" style="top:728px;background:#f7f8fa"></div>
<div class="cell" style="left:24px;top:743px">1000280</div>
<div class="cell" style="left:224px;top:743px">2025-10-21</div>
<div class="cell" style="left:424px;top:743px">IDA BRANCH</div>
<div class="cell" style="left:624px;top:743px">ra</div>
<div class="cell" style="left:1024px;top:743px">ra</div>
<div class="row" style="top:784px;background:#fafafa"></div>
<div class="cell" style="left:24px;top:799px">1000279</div>
<div class="cell" style="left:224px;top:799px">2025-10-06</div>
<div class="cell" style="left:424px;top:799px">1001</div>
<div class="cell" style="left:624px;top:799px">GOH PC SA<span style="letter-spacing:-.45px">...</span></div>
<div class="cell" style="left:824px;top:799px">test@gmail<span style="letter-spacing:-.45px">...</span></div>
<div class="cell" style="left:1024px;top:799px">GOH PC SA<span style="letter-spacing:-.45px">...</span></div>
<div class="cell" style="left:1224px;top:799px">test@gmail<span style="letter-spacing:-.45px">...</span></div>
<div class="cell" style="left:1624px;top:799px">This is seri<span style="letter-spacing:-.45px">...</span></div>
<div class="cell" style="left:1824px;top:799px">Replaceme<span style="letter-spacing:-.45px">...</span></div>
<div class="cell" style="left:2024px;top:799px">Replaceme<span style="letter-spacing:-.45px">...</span></div>
<div class="cell" style="left:2224px;top:799px">Reason go</div>
<div class="row" style="top:840px;background:#f7f8fa"></div>
<div class="cell" style="left:24px;top:855px">1000278</div>
<div class="cell" style="left:224px;top:855px">2025-09-25</div>
<div class="cell" style="left:424px;top:855px">1001</div>
<div class="cell" style="left:624px;top:855px">test47 edit2</div>
<div class="cell" style="left:824px;top:855px">47@gmail.c<span style="letter-spacing:-.45px">...</span></div>
<div class="cell" style="left:1024px;top:855px">test47 edit2</div>
<div class="cell" style="left:1224px;top:855px">47@gmail.c<span style="letter-spacing:-.45px">...</span></div>
<div class="cell" style="left:1424px;top:855px">+6058854<span style="letter-spacing:-.45px">...</span></div>
<div class="row" style="top:896px;background:#fafafa"></div>
<div class="cell" style="left:24px;top:911px">1000277</div>
<div class="cell" style="left:224px;top:911px">2025-09-12</div>
<div class="cell" style="left:424px;top:911px">05SS</div>
<div class="cell" style="left:624px;top:911px">testposnew2</div>
<div class="cell" style="left:824px;top:911px">testposnew<span style="letter-spacing:-.45px">...</span></div>
<div class="cell" style="left:1024px;top:911px">testposnew2</div>
<div class="cell" style="left:1224px;top:911px">testposnew<span style="letter-spacing:-.45px">...</span></div>
<div class="cell" style="left:1424px;top:911px">+60196565<span style="letter-spacing:-.45px">...</span></div>
</div>
<div class="hc" style="left:25px;top:163px">Service ...</div>
<div class="fi" style="left:24px;top:223px"></div>
<svg class="abs" style="left:148px;top:229px" width="24" height="24" viewBox="0 0 24 24"><path d="M2.6 2.6H21.4Q21.6 4.2 20 5.8L14.4 11.2V16.2L9.8 20.2V11.4L4 5.8Q2.4 4.2 2.6 2.6Z" fill="none" stroke="#616161" stroke-width="1.8" stroke-linejoin="round"/></svg>
<div class="hc" style="left:225px;top:163px">Date Txn</div>
<div class="fi" style="left:224px;top:223px"></div>
<svg class="abs" style="left:348px;top:229px" width="24" height="24" viewBox="0 0 24 24"><path d="M2.6 2.6H21.4Q21.6 4.2 20 5.8L14.4 11.2V16.2L9.8 20.2V11.4L4 5.8Q2.4 4.2 2.6 2.6Z" fill="none" stroke="#616161" stroke-width="1.8" stroke-linejoin="round"/></svg>
<div class="sep" style="left:198px;top:160px;height:31px"></div>
<div class="sep" style="left:198px;top:225px;height:31px"></div>
<div class="hc" style="left:425px;top:163px">Branch</div>
<div class="fi" style="left:424px;top:223px"></div>
<svg class="abs" style="left:548px;top:229px" width="24" height="24" viewBox="0 0 24 24"><path d="M2.6 2.6H21.4Q21.6 4.2 20 5.8L14.4 11.2V16.2L9.8 20.2V11.4L4 5.8Q2.4 4.2 2.6 2.6Z" fill="none" stroke="#616161" stroke-width="1.8" stroke-linejoin="round"/></svg>
<div class="sep" style="left:398px;top:160px;height:31px"></div>
<div class="sep" style="left:398px;top:225px;height:31px"></div>
<div class="hc" style="left:625px;top:163px">Customer</div>
<div class="fi" style="left:624px;top:223px"></div>
<svg class="abs" style="left:748px;top:229px" width="24" height="24" viewBox="0 0 24 24"><path d="M2.6 2.6H21.4Q21.6 4.2 20 5.8L14.4 11.2V16.2L9.8 20.2V11.4L4 5.8Q2.4 4.2 2.6 2.6Z" fill="none" stroke="#616161" stroke-width="1.8" stroke-linejoin="round"/></svg>
<div class="sep" style="left:598px;top:160px;height:31px"></div>
<div class="sep" style="left:598px;top:225px;height:31px"></div>
<div class="hc" style="left:825px;top:163px">Email</div>
<div class="fi" style="left:824px;top:223px"></div>
<svg class="abs" style="left:948px;top:229px" width="24" height="24" viewBox="0 0 24 24"><path d="M2.6 2.6H21.4Q21.6 4.2 20 5.8L14.4 11.2V16.2L9.8 20.2V11.4L4 5.8Q2.4 4.2 2.6 2.6Z" fill="none" stroke="#616161" stroke-width="1.8" stroke-linejoin="round"/></svg>
<div class="sep" style="left:798px;top:160px;height:31px"></div>
<div class="sep" style="left:798px;top:225px;height:31px"></div>
<div class="hc" style="left:1025px;top:163px">Sender ...</div>
<div class="fi" style="left:1024px;top:223px"></div>
<svg class="abs" style="left:1148px;top:229px" width="24" height="24" viewBox="0 0 24 24"><path d="M2.6 2.6H21.4Q21.6 4.2 20 5.8L14.4 11.2V16.2L9.8 20.2V11.4L4 5.8Q2.4 4.2 2.6 2.6Z" fill="none" stroke="#616161" stroke-width="1.8" stroke-linejoin="round"/></svg>
<div class="sep" style="left:998px;top:160px;height:31px"></div>
<div class="sep" style="left:998px;top:225px;height:31px"></div>
<div class="hc" style="left:1225px;top:163px">Sender ...</div>
<div class="fi" style="left:1224px;top:223px"></div>
<svg class="abs" style="left:1348px;top:229px" width="24" height="24" viewBox="0 0 24 24"><path d="M2.6 2.6H21.4Q21.6 4.2 20 5.8L14.4 11.2V16.2L9.8 20.2V11.4L4 5.8Q2.4 4.2 2.6 2.6Z" fill="none" stroke="#616161" stroke-width="1.8" stroke-linejoin="round"/></svg>
<div class="sep" style="left:1198px;top:160px;height:31px"></div>
<div class="sep" style="left:1198px;top:225px;height:31px"></div>
<div class="hc" style="left:1425px;top:163px">Sender ...</div>
<div class="fi" style="left:1424px;top:223px"></div>
<svg class="abs" style="left:1548px;top:229px" width="24" height="24" viewBox="0 0 24 24"><path d="M2.6 2.6H21.4Q21.6 4.2 20 5.8L14.4 11.2V16.2L9.8 20.2V11.4L4 5.8Q2.4 4.2 2.6 2.6Z" fill="none" stroke="#616161" stroke-width="1.8" stroke-linejoin="round"/></svg>
<div class="sep" style="left:1398px;top:160px;height:31px"></div>
<div class="sep" style="left:1398px;top:225px;height:31px"></div>
<div class="hc" style="left:1625px;top:163px">Serial No</div>
<div class="fi" style="left:1624px;top:223px"></div>
<svg class="abs" style="left:1748px;top:229px" width="24" height="24" viewBox="0 0 24 24"><path d="M2.6 2.6H21.4Q21.6 4.2 20 5.8L14.4 11.2V16.2L9.8 20.2V11.4L4 5.8Q2.4 4.2 2.6 2.6Z" fill="none" stroke="#616161" stroke-width="1.8" stroke-linejoin="round"/></svg>
<div class="sep" style="left:1598px;top:160px;height:31px"></div>
<div class="sep" style="left:1598px;top:225px;height:31px"></div>
<div class="hc" style="left:1825px;top:163px">Replace...</div>
<div class="fi" style="left:1824px;top:223px"></div>
<svg class="abs" style="left:1948px;top:229px" width="24" height="24" viewBox="0 0 24 24"><path d="M2.6 2.6H21.4Q21.6 4.2 20 5.8L14.4 11.2V16.2L9.8 20.2V11.4L4 5.8Q2.4 4.2 2.6 2.6Z" fill="none" stroke="#616161" stroke-width="1.8" stroke-linejoin="round"/></svg>
<div class="sep" style="left:1798px;top:160px;height:31px"></div>
<div class="sep" style="left:1798px;top:225px;height:31px"></div>
<div class="hc" style="left:2025px;top:163px">Replace...</div>
<div class="fi" style="left:2024px;top:223px"></div>
<svg class="abs" style="left:2148px;top:229px" width="24" height="24" viewBox="0 0 24 24"><path d="M2.6 2.6H21.4Q21.6 4.2 20 5.8L14.4 11.2V16.2L9.8 20.2V11.4L4 5.8Q2.4 4.2 2.6 2.6Z" fill="none" stroke="#616161" stroke-width="1.8" stroke-linejoin="round"/></svg>
<div class="sep" style="left:1998px;top:160px;height:31px"></div>
<div class="sep" style="left:1998px;top:225px;height:31px"></div>
<div class="hc" style="left:2225px;top:163px">Reason</div>
<div class="fi" style="left:2224px;top:223px"></div>
<svg class="abs" style="left:2348px;top:229px" width="24" height="24" viewBox="0 0 24 24"><path d="M2.6 2.6H21.4Q21.6 4.2 20 5.8L14.4 11.2V16.2L9.8 20.2V11.4L4 5.8Q2.4 4.2 2.6 2.6Z" fill="none" stroke="#616161" stroke-width="1.8" stroke-linejoin="round"/></svg>
<div class="sep" style="left:2198px;top:160px;height:31px"></div>
<div class="sep" style="left:2198px;top:225px;height:31px"></div>
<div class="abs" style="left:0;top:1212px;width:2333px;height:30px;background:#f4f4f4;border-top:2px solid #dedede"></div>
<div class="abs" style="left:6px;top:1220px;width:786px;height:16px;border-radius:8px;background:#bdbdbd"></div>
<div class="abs" style="left:2333px;top:1213px;width:30px;height:29px;background:#f9f9f9"></div>
<div class="abs" style="left:237px;top:227px;font-size:24px;line-height:28px;color:#888;letter-spacing:1.5px;width:50px;overflow:hidden;white-space:nowrap">dd/m</div>
<svg class="abs" style="left:292px;top:230px" width="20" height="21" viewBox="0 0 20 21"><rect x="1.3" y="3.3" width="17.4" height="16.4" rx="2" fill="none" stroke="#111" stroke-width="2.6"/><rect x="1" y="3" width="18" height="5" fill="#111"/><rect x="4" y="0" width="2.6" height="4" fill="#111"/><rect x="13.4" y="0" width="2.6" height="4" fill="#111"/></svg>
<div class="abs" style="left:2362px;top:144px;width:42px;height:1100px;background:linear-gradient(to right,#f7f8fa,#eef1fa);border-left:2px solid #b7bec5"></div>
<div class="abs" style="left:2364px;top:175px;width:40px;height:2px;background:#b9c0c5"></div>
<div class="abs" style="left:2364px;top:347px;width:40px;height:3px;background:#b9c0c5"></div>
<div class="abs" style="left:2364px;top:491px;width:40px;height:2px;background:#b9c0c5"></div>
<svg class="abs" style="left:2374px;top:201px" width="20" height="18" viewBox="0 0 20 18"><path d="M1.2 0v18M7.2 0v18M13.2 0v18M19 0v18" stroke="#111" stroke-width="2.2"/></svg>
<div class="abs" style="left:2370px;top:233px;width:28px;height:100px"><div style="position:absolute;left:0;top:0;transform-origin:0 0;transform:translate(28px,0) rotate(90deg);font-size:24px;line-height:28px;color:#111;white-space:nowrap;letter-spacing:.3px">Columns</div></div>
<svg class="abs" style="left:2372px;top:371px" width="24" height="24" viewBox="0 0 24 24"><path d="M2.6 2.6H21.4Q21.6 4.2 20 5.8L14.4 11.2V16.2L9.8 20.2V11.4L4 5.8Q2.4 4.2 2.6 2.6Z" fill="none" stroke="#111" stroke-width="1.9" stroke-linejoin="round"/></svg>
<div class="abs" style="left:2370px;top:406px;width:28px;height:80px"><div style="position:absolute;left:0;top:0;transform-origin:0 0;transform:translate(28px,0) rotate(90deg);font-size:24px;line-height:28px;color:#111;white-space:nowrap;letter-spacing:.3px">Filters</div></div>
</div>
<div class="ov" style="left:2845px;top:128px;width:49px;height:1442px;background:linear-gradient(to right,rgba(220,228,249,0) 0px,rgba(220,228,249,.12) 15px,rgba(214,224,248,.4) 49px)"></div>
</body></html>
